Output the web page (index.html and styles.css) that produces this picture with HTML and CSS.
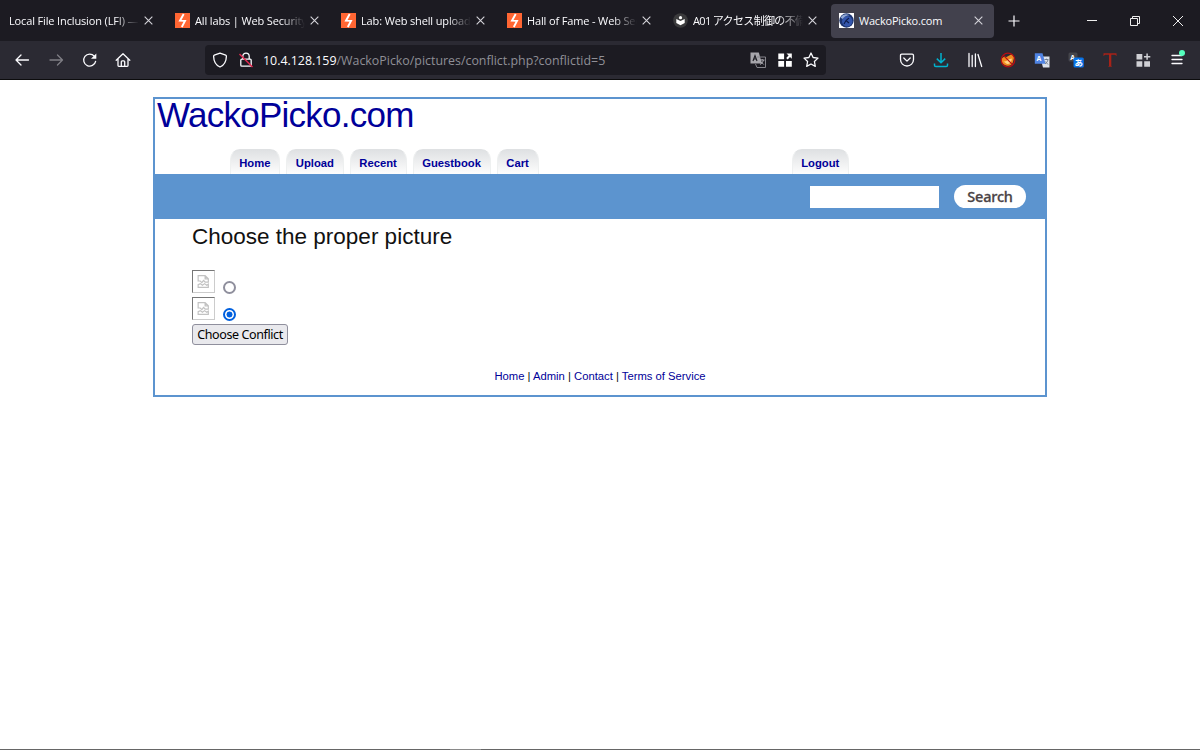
FILE: index.html
```
<!DOCTYPE html>
<html lang="en">
<head>
<meta charset="utf-8">
<title>WackoPicko.com</title>
<link rel="stylesheet" href="styles.css">
</head>
<body>

<svg class="defs" width="0" height="0">
  <symbol id="close" viewBox="0 0 10 10"><path d="M1.500 1.500l7 7M8.500 1.500l-7 7" stroke="#d5d4da" stroke-width="1" fill="none"/></symbol>
  <symbol id="bolt" viewBox="0 0 15 15"><path fill="#ff6633" d="M0 0h15v15H0z"/><path d="M8.700 1L5 7.700l5 .2L6.800 14" fill="none" stroke="#fff" stroke-width="1.900"/></symbol>
  <symbol id="broken" viewBox="0 0 14 14"><path d="M2 1.500h6.500l3 3v3H8.500L7 6 5.500 8 4 6.500H2zM8.500 1.500v3h3M2 12.500V10l2-1 2 1.500 2-1.500 2 1.500 1.500-1v3z" fill="none" stroke="#c2c2c2" stroke-width="1.100"/></symbol>
</svg>

<!-- Tabs -->
<div class="tabbar">
  <div class="tab"><span class="label">Local File Inclusion (LFI) —</span><svg class="x"><use href="#close"/></svg></div>
  <div class="tab"><svg class="fav"><use href="#bolt"/></svg><span class="label">All labs | Web Security</span><svg class="x"><use href="#close"/></svg></div>
  <div class="tab"><svg class="fav"><use href="#bolt"/></svg><span class="label">Lab: Web shell upload</span><svg class="x"><use href="#close"/></svg></div>
  <div class="tab"><svg class="fav"><use href="#bolt"/></svg><span class="label">Hall of Fame - Web Sec</span><svg class="x"><use href="#close"/></svg></div>
  <div class="tab">
    <svg class="fav" viewBox="0 0 15 15"><circle cx="7.500" cy="7.500" r="7.300" fill="#3a3a3c"/><circle cx="7.500" cy="4.700" r="1.600" fill="#fff"/><path d="M3.300 5.900l4.200 2 4.200-2v4.200l-4.200 2.200-4.200-2.200z" fill="#fff"/></svg>
    <span class="label jp">A01 アクセス制御の不備</span><svg class="x"><use href="#close"/></svg>
  </div>
  <div class="tab active">
    <svg class="fav" viewBox="0 0 15 15"><path fill="#fff" d="M0 0h15v15H0z"/><circle cx="7.500" cy="7.500" r="7.200" fill="#1c3470"/><circle cx="8.200" cy="8.200" r="5.200" fill="#3456ac"/><path d="M1.500 4.500Q5-.5 10.500 2.200Q6 2.500 3.500 6z" fill="#91a9d6"/><path d="M5 11l2-3.500 3-2.500M7 7.500l3 2.500" stroke="#0d1b4a" stroke-width="1.100" fill="none"/></svg>
    <span class="label full">WackoPicko.com</span><svg class="x"><use href="#close"/></svg>
  </div>
  <svg class="newtab" viewBox="0 0 12 12"><path d="M6 .5v11M.5 6h11" stroke="#fbfbfe" stroke-width="1.200"/></svg>
  <div class="window-buttons">
    <svg width="12" height="12" viewBox="0 0 12 12"><path d="M1 5.500h10" stroke="#eee"/></svg>
    <svg width="12" height="12" viewBox="0 0 12 12"><path d="M1.500 3.500h7v7h-7zM3.500 3.500v-2h7v7h-2" stroke="#eee" fill="none"/></svg>
    <svg width="12" height="12" viewBox="0 0 12 12"><path d="M1 1l10 10M11 1L1 11" stroke="#eee"/></svg>
  </div>
</div>

<!-- Toolbar -->
<div class="toolbar">
  <div class="nav">
    <svg viewBox="0 0 16 16"><path d="M14.500 8H2M7 3L2 8l5 5" class="line"/></svg>
    <svg class="dim" viewBox="0 0 16 16"><path d="M2 8h12.500M9.500 3l5 5-5 5" class="line"/></svg>
    <svg viewBox="0 0 16 16"><path d="M14.600 9.300A6 6 0 1 1 13.300 4.200" class="line"/><path d="M15.300 1.500v5.300H10z" fill="#fbfbfe"/></svg>
    <svg viewBox="0 0 16 16"><path d="M1.200 8.200L8 1.700l6.800 6.500M3 7v6.500q0 .8.800.8h8.400q.8 0 .8-.8V7M6.300 14V9.700q0-.9.900-.9h1.600q.9 0 .9.900V14" class="line"/></svg>
  </div>
  <div class="urlbar">
    <svg viewBox="0 0 16 16"><path d="M8 1.200l5.700 2q.7.300.7 1C14.300 9 12.500 13 8 15 3.500 13 1.700 9 1.600 4.200q0-.7.7-1z" class="line"/></svg>
    <svg class="lock" viewBox="0 0 16 16"><path d="M4.800 7V4.300a3.200 3.200 0 0 1 6.400 0V7M3.800 7.200h8.400q1 0 1 1v5q0 1-1 1H3.800q-1 0-1-1v-5q0-1 1-1z" class="line"/><path d="M1.500 2l13 13" stroke="#e22850" stroke-width="1.500"/></svg>
    <span class="url"><b>10.4.128.159</b>/WackoPicko/pictures/conflict.php?conflictid=5</span>
    <div class="url-icons">
      <svg viewBox="0 0 16 16"><path d="M.5.500h8.300l3.200 11H.5z" fill="#a7a6ac"/><path d="M7 5h8.500v10.500H7l-1.500-3.500" fill="none" stroke="#85848b"/><path d="M3 9l2-5.500L7 9M3.700 7h2.600" stroke="#1c1b22" stroke-width="1.100" fill="none"/><path d="M10 8h4.500M12.200 7v1.200M13.500 8q-.5 3-3.500 4.500M10.700 9.500l3 3" stroke="#a7a6ac" fill="none"/></svg>
      <svg viewBox="0 0 16 16"><path d="M1.300 1.500h5.800v5.800H1.300zM1.300 9h5.800v5.700H1.300zM9 9h5.800v5.700H9zM9.500 1.500h5.300v5.300l-1.800-1.700-2.300 2.400-1.500-1.400 2.400-2.500z" fill="#fff"/></svg>
      <svg viewBox="0 0 16 16"><path d="M8 1l2.100 4.500 4.900.6-3.600 3.400.9 4.900L8 12l-4.300 2.400.9-4.900L1 6.100l4.900-.6z" class="line"/></svg>
    </div>
  </div>
  <div class="extensions">
    <svg viewBox="0 0 16 16"><path d="M2.800 2.200h10.400q1.300 0 1.300 1.300v4a6.500 6.500 0 0 1-13 0v-4q0-1.300 1.300-1.300zM4.800 6L8 9.100 11.200 6" class="line"/></svg>
    <svg viewBox="0 0 16 16"><path d="M8 1v9.500M3.800 6.600L8 10.700l4.200-4.100M1.500 11.500v1.700q0 1.300 1.300 1.300h10.400q1.300 0 1.300-1.300v-1.700" fill="none" stroke="#00b3cf" stroke-width="1.500"/></svg>
    <svg viewBox="0 0 16 16"><path d="M2 1.500v13M5.200 3.500v11M8.400 2v12.500M11 2.500l3.700 12" class="line"/></svg>
    <svg viewBox="0 0 16 16"><path d="M1.500 7q2-3 5-2l5.500-3 2 3.500-1 4.500q-2 5-7 3.500T1.500 7z" fill="#ef8a20"/><path d="M3.500 9.500q3 .5 4.500-2l4-1q-1 6-5 5.500z" fill="#ffd584"/><circle cx="8" cy="8" r="6.800" fill="none" stroke="#b80d12" stroke-width="1.200"/><path d="M3.200 3.200l9.600 9.600" stroke="#b80d12" stroke-width="1.200"/></svg>
    <svg viewBox="0 0 16 16"><path d="M6 4.500h9.500v11H9z" fill="#dce2ec"/><path d="M.8 1.200h7.700l3 10.500H.8z" fill="#4f83e3"/><text x="2.600" y="9.200" class="glyph">A</text><path d="M10.500 7.500h4M12.500 6.700v1M14 8q-.7 2.500-3 4M11.300 9.500l2.700 3" stroke="#6c7888" fill="none" stroke-width=".9"/></svg>
    <svg viewBox="0 0 16 16"><rect x=".5" y=".5" width="9" height="9" rx="1.500" fill="#45454b"/><text x="2.200" y="7.700" class="glyph">A</text><rect x="5.500" y="5.500" width="10.300" height="10" rx="1.500" fill="#0872e8"/><text x="6.500" y="13.900" class="glyph kana">あ</text></svg>
    <svg viewBox="0 0 16 16"><path d="M1.500 1.300h13v3l-1.300-1.500H9.300V14l1 .8H6l1-.8V2.800H3L1.500 4.300z" fill="#a82218"/></svg>
    <svg viewBox="0 0 16 16"><path d="M1.500 2h5.800v5.500H1.500zM1.500 9.200h5.800v5.500H1.500zM9.200 9.200H15v5.500H9.200z" fill="#cfcfd4"/><path d="M12.100 1.500v6.300M9 4.700h6.300" stroke="#cfcfd4" stroke-width="1.500"/></svg>
    <div class="menu"><svg viewBox="0 0 16 16"><path d="M3 3.500h10M3 7.500h10M3 11.500h10" class="line"/></svg><i class="dot"></i></div>
  </div>
</div>

<!-- Page -->
<div class="content">
  <div class="column">
    <h1 id="title"><a href="#">WackoPicko.com</a></h1>
    <div id="menu">
      <ul>
        <li><a href="#">Home</a></li>
        <li><a href="#">Upload</a></li>
        <li><a href="#">Recent</a></li>
        <li><a href="#">Guestbook</a></li>
        <li><a href="#">Cart</a></li>
        <li class="logout"><a href="#">Logout</a></li>
      </ul>
    </div>
    <form class="search">
      <input type="text" class="query">
      <button type="button" class="go">Search</button>
    </form>
    <div class="main">
      <h2>Choose the proper picture</h2>
      <form>
        <div class="choice"><span class="pic"><svg><use href="#broken"/></svg></span><input type="radio" name="conflict"></div>
        <div class="choice"><span class="pic"><svg><use href="#broken"/></svg></span><input type="radio" name="conflict" checked></div>
        <button type="button" class="submit">Choose Conflict</button>
      </form>
    </div>
    <div class="footer"><a href="#">Home</a> | <a href="#">Admin</a> | <a href="#">Contact</a> | <a href="#">Terms of Service</a></div>
  </div>
</div>
<div class="bottom-edge"><span></span></div>

</body>
</html>
```
FILE: styles.css
```
* {
  box-sizing: border-box;
}

body {
  margin: 0;
  height: 750px;
  display: flex;
  flex-direction: column;
  overflow: hidden;
  background-color: #fff;
  color: #111;
  font-family: "Liberation Sans", Arial, sans-serif;
  font-size: 11.25px;
}

svg {
  display: block;
  flex: none;
}

.defs {
  position: absolute;
}

.line {
  fill: none;
  stroke: #fbfbfe;
  stroke-width: 1.3;
  stroke-linecap: round;
  stroke-linejoin: round;
}

/* Tabs */
.tabbar {
  display: flex;
  align-items: center;
  height: 41px;
  flex: none;
  background-color: #1c1b22;
  color: #fbfbfe;
  font-family: "Open Sans", "Noto Sans CJK JP", sans-serif;
  font-size: 11px;
}

.tab {
  display: flex;
  align-items: center;
  width: 163px;
  height: 34px;
  margin: 0 2px 0 1px;
  padding: 0 10px 0 8px;
  border-radius: 4px;
}

.tab.active {
  background-color: #42414d;
}

.tab .fav {
  width: 15px;
  height: 15px;
  margin-right: 5px;
}

.tab .label {
  flex: 1;
  min-width: 0;
  white-space: nowrap;
  line-height: 20px;
  letter-spacing: -0.14px;
  margin-right: 4px;
  margin-top: 1px;
  mask-image: linear-gradient(to left, transparent, #000 24px);
}

.tab .label.jp {
  letter-spacing: -0.65px;
}

.tab .label.full {
  letter-spacing: -0.2px;
  mask-image: none;
}

.tab .x {
  width: 11px;
  height: 11px;
}

.newtab {
  width: 12px;
  height: 12px;
  margin-left: 12px;
}

.window-buttons {
  display: flex;
  gap: 31px;
  margin-left: auto;
  padding-right: 16px;
}

/* Toolbar */
.toolbar {
  display: flex;
  align-items: center;
  height: 39px;
  flex: none;
  background-color: #2b2a33;
  border-bottom: 1px solid #0c0c0d;
}

.toolbar svg {
  width: 16px;
  height: 16px;
}

.nav {
  display: flex;
  gap: 17.6px;
  width: 205px;
  padding-left: 14px;
}

.nav .dim {
  opacity: 0.4;
}

.urlbar {
  display: flex;
  align-items: center;
  width: 621px;
  height: 30px;
  padding: 0 7px;
  border-radius: 4px;
  background-color: #1c1b22;
}

.urlbar .lock {
  margin: 0 9px 0 10px;
}

.url {
  color: #8f8f96;
  font-family: "Open Sans", sans-serif;
  font-size: 12.4px;
  white-space: nowrap;
}

.url b {
  color: #fbfbfe;
  font-weight: normal;
}

.url-icons {
  display: flex;
  gap: 10.5px;
  margin-left: auto;
}

.extensions {
  display: flex;
  gap: 17.75px;
  margin-left: auto;
  padding-right: 15px;
}

.glyph {
  fill: #fff;
  font: bold 7px "Open Sans", sans-serif;
}

.glyph.kana {
  font: bold 8.5px "Noto Sans CJK JP", sans-serif;
}

.menu {
  position: relative;
}

.dot {
  position: absolute;
  top: -2px;
  right: 0;
  width: 6px;
  height: 6px;
  border-radius: 50%;
  background-color: #54ffbd;
}

/* Page */
.content {
  flex: 1;
  padding-top: 17px;
}

.column {
  width: 894px;
  height: 300px;
  margin: 0 auto;
  border: 2px solid #5c94cf;
}

a {
  color: #000099;
  text-decoration: none;
}

#title {
  margin: 0;
  padding-left: 2px;
  height: 50px;
  font-size: 35px;
  font-weight: normal;
  letter-spacing: -0.75px;
  line-height: 32px;
}

#menu ul {
  display: flex;
  gap: 6px;
  margin: 0;
  padding: 0 196px 0 74.5px;
  list-style: none;
}

#menu li {
  height: 25px;
  padding: 0 8.7px;
  border: 1px solid #eef0f0;
  border-bottom: none;
  border-top-color: #dfe1e3;
  border-radius: 10px 10px 0 0;
  background: linear-gradient(#dfe1e3, #fdfdfd);
  font-weight: bold;
  line-height: 26px;
}

#menu .logout {
  margin-left: auto;
}

.search {
  display: flex;
  align-items: center;
  justify-content: flex-end;
  gap: 15px;
  height: 45px;
  padding-right: 19px;
  background-color: #5c94cf;
}

.query {
  width: 129px;
  height: 22px;
  border: none;
  background-color: #fff;
}

.go {
  width: 72px;
  height: 23px;
  padding: 0;
  border: none;
  border-radius: 12px;
  background-color: #fff;
  color: #4b4345;
  font: 500 14.5px/21px "Noto Sans", sans-serif;
  letter-spacing: -0.2px;
  -webkit-text-stroke: 0.3px #4b4345;
}

.main {
  height: 150px;
  padding-left: 37px;
}

.main h2 {
  margin: 0;
  height: 51px;
  font-size: 22.5px;
  font-weight: normal;
  line-height: 35px;
}

.choice {
  display: flex;
  align-items: flex-end;
  height: 23px;
  margin-bottom: 4px;
}

.pic {
  width: 23px;
  height: 23px;
  padding: 3px;
  border: 1px solid;
  border-color: #777 #ccc #ccc #777;
}

.pic svg {
  width: 15px;
  height: 15px;
}

.choice input {
  appearance: none;
  width: 13px;
  height: 13px;
  margin: 0 0 -1px 7.5px;
  border: 2px solid #8f8f9d;
  border-radius: 50%;
}

.choice input:checked {
  border-color: #0060df;
  background: radial-gradient(#0060df 2.7px, #fff 3.3px);
}

.submit {
  display: block;
  width: 96px;
  height: 21px;
  padding: 0;
  border: 1px solid #8f8f9d;
  border-radius: 3px;
  background-color: #e9e9ed;
  color: #000;
  font: 12.5px "Noto Sans", sans-serif;
  letter-spacing: -0.4px;
  line-height: 20px;
  white-space: nowrap;
}

.footer {
  text-align: center;
  line-height: 15px;
}

.bottom-edge {
  height: 1px;
  flex: none;
  background-color: #666;
}

.bottom-edge span {
  display: block;
  width: 31px;
  height: 1px;
  margin-left: 450px;
  background-color: #8a8a8a;
}
```
